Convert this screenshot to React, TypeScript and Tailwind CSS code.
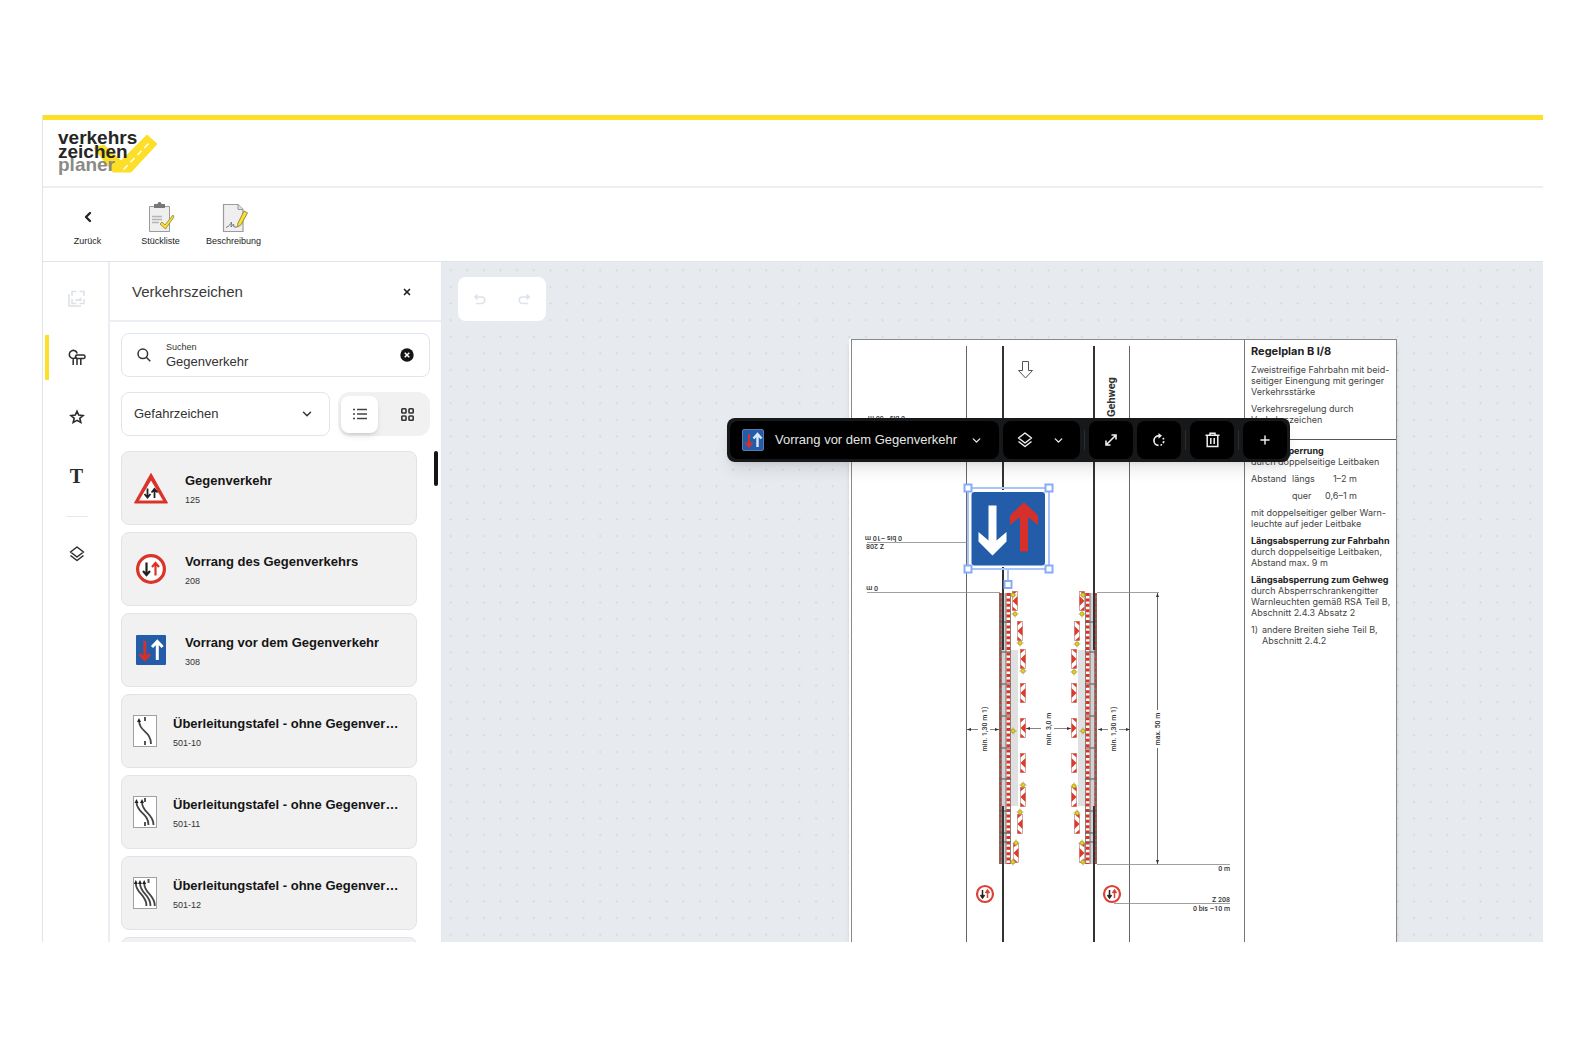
import type { ReactNode } from 'react'
import { ChevronDown, ChevronLeft, Plus, X } from 'lucide-react'

type SignKind = '125' | '208' | '308' | '501-10' | '501-11' | '501-12'

const SIGNS: { name: string; code: string; kind: SignKind }[] = [
  { name: 'Gegenverkehr', code: '125', kind: '125' },
  { name: 'Vorrang des Gegenverkehrs', code: '208', kind: '208' },
  { name: 'Vorrang vor dem Gegenverkehr', code: '308', kind: '308' },
  { name: 'Überleitungstafel - ohne Gegenverkehr', code: '501-10', kind: '501-10' },
  { name: 'Überleitungstafel - ohne Gegenverkehr', code: '501-11', kind: '501-11' },
  { name: 'Überleitungstafel - ohne Gegenverkehr', code: '501-12', kind: '501-12' },
]

// Lane curves on the 501 boards, by number of lanes
const LANES: Record<string, string[]> = {
  '501-10': ['M6 5C6 17 18 16 18 29'],
  '501-11': ['M3.5 6C3.5 17 15.5 17 15.5 29', 'M9 6C9 17 20.5 17 20.5 29'],
  '501-12': ['M2.8 6C2.8 17 13.5 17 13.5 29', 'M7 6C7 17 17.5 17 17.5 29', 'M11.2 6C11.2 17 21.8 17 21.8 29'],
}
const LANE_HEADS: Record<string, number[]> = {
  '501-10': [6],
  '501-11': [3.5, 9],
  '501-12': [2.8, 7, 11.2],
}

function SignIcon({ kind }: { kind: SignKind }) {
  if (kind === '125') {
    return (
      <svg width="36" height="32" viewBox="0 0 36 32" aria-hidden="true">
        <path d="M18 1.5 34.500 31H1.500Z" fill="#db3328" stroke="#db3328" strokeLinejoin="round" />
        <path d="M18 8.5 30 28.500H6Z" fill="#fff" />
        <path d="M14.500 16.500v8.500M11.500 22l3 3.500 3-3.500M21.500 26v-8.500M18.500 20.500l3-3.500 3 3.500" fill="none" stroke="#222" strokeWidth="1.800" />
      </svg>
    )
  }
  if (kind === '208') {
    return (
      <svg width="36" height="30" viewBox="0 0 36 30" aria-hidden="true">
        <circle cx="18" cy="15" r="13.400" fill="#fff" stroke="#db3328" strokeWidth="3.200" />
        <path d="M13.500 8.500v12M10 17l3.500 4 3.500-4" fill="none" stroke="#222" strokeWidth="2.200" />
        <path d="M22.500 21.500v-12M19 13l3.500-4 3.500 4" fill="none" stroke="#db3328" strokeWidth="2.200" />
      </svg>
    )
  }
  if (kind === '308') {
    return (
      <svg width="36" height="30" viewBox="0 0 36 30" aria-hidden="true">
        <rect x="3" width="30" height="30" rx="1" fill="#235da9" />
        <path d="M11.800 6v17M6.500 19l5.300 5.500L17 19" fill="none" stroke="#d7302a" strokeWidth="3" />
        <path d="M24.300 25V7M19 12l5.300-5.500 5.300 5.500" fill="none" stroke="#fff" strokeWidth="3" />
      </svg>
    )
  }
  return (
    <svg width="24" height="32" viewBox="0 0 24 32" aria-hidden="true">
      <rect x=".5" y=".5" width="23" height="31" fill="#fff" stroke="#a0a0a0" />
      <path d={kind === '501-12' ? 'M15.500 2v4' : 'M12 2v4M12 26v4'} stroke="#555" strokeWidth="2" />
      {LANES[kind].map(d => (
        <path key={d} d={d} fill="none" stroke="#444" strokeWidth="1.800" />
      ))}
      {LANE_HEADS[kind].map(x => (
        <path key={x} d={`M${x} 3l2 4h-4z`} fill="#222" />
      ))}
    </svg>
  )
}

function LayersIcon() {
  return (
    <svg width="16" height="16" viewBox="0 0 16 16" fill="none" stroke="currentColor" strokeWidth="1.500" strokeLinejoin="round" aria-hidden="true">
      <path d="M8 1 14.500 6 8 11 1.500 6Z" />
      <path d="M1.500 9.500 8 14.500l6.500-5" />
    </svg>
  )
}

function Logo() {
  return (
    <svg width="104" height="56" viewBox="56 124 104 56" role="img" aria-label="verkehrs zeichen planer">
      <path d="M94 147 104 144l17 16 26-26 10 9-26 28h-18Z" fill="#fcdf26" stroke="#fcdf26" strokeLinejoin="round" />
      <path d="M123.500 168.500 150 141" stroke="#fff" strokeWidth="1.500" strokeDasharray="6 4" />
      <g fontFamily="'Liberation Sans', Arial, sans-serif" fontSize="19" fontWeight="700">
        <text x="58" y="170" fill="#8c8a86">planer</text>
        <text x="58" y="157" fill="#262626">zeichen</text>
        <text x="58" y="143" fill="#262626">verkehrs</text>
      </g>
    </svg>
  )
}

function ActionButton({ label, children }: { label: string; children: ReactNode }) {
  return (
    <button type="button" className="flex w-[73px] flex-col items-center gap-0.5 text-[9px] leading-[14px] text-[#222]">
      <span className="flex h-[30px] items-center justify-center">{children}</span>
      {label}
    </button>
  )
}

function RailButton({ label, active, faded, children }: {
  label: string
  active?: boolean
  faded?: boolean
  children: ReactNode
}) {
  return (
    <button
      type="button"
      aria-label={label}
      className={`flex h-[45px] w-full items-center justify-center border-l-4 pr-1 ${active ? 'border-[#fcdf26]' : 'border-transparent'} ${faded ? 'text-[#dce1e8]' : 'text-[#2b2b2b]'}`}
    >
      {children}
    </button>
  )
}

function Rail() {
  return (
    <nav className="flex w-[67px] shrink-0 flex-col gap-[14px] border-r-2 border-[#ebeff4] pl-0.5 pt-[14px]">
      <RailButton label="Bilder" faded>
        <svg width="17" height="17" viewBox="0 0 17 17" fill="none" stroke="currentColor" strokeWidth="1.500" aria-hidden="true">
          <path d="M1 4v12h12" />
          <path d="M4 6V1.500h4.500M11.500 1.500H16V6M16 9v4.500h-4.500M8.500 13.500H4V9" />
          <path d="M6.500 11 9 8.500l1.500 1.500L12.500 7l1.500 4z" fill="currentColor" stroke="none" />
        </svg>
      </RailButton>
      <RailButton label="Verkehrszeichen" active>
        <svg width="18" height="17" viewBox="0 0 18 17" fill="none" stroke="currentColor" strokeWidth="1.500" aria-hidden="true">
          <path d="M8.500 7.800A4 4 0 1 1 9.200 4.500M5.200 9v7M9 9.500V16M12.800 9.500V16" />
          <rect x="7.500" y="6" width="9.500" height="3.500" rx="1.600" />
        </svg>
      </RailButton>
      <RailButton label="Favoriten">
        <svg width="16" height="16" viewBox="0 0 16 16" fill="none" stroke="currentColor" strokeWidth="1.600" aria-hidden="true">
          <path d="M8 2.200 9.700 6.100l4.300.4-3.200 2.800 1 4.200L8 11.300l-3.800 2.200 1-4.200L2 6.500l4.300-.4Z" />
        </svg>
      </RailButton>
      <RailButton label="Text">
        <span className="font-['Liberation_Serif',serif] text-[20px] font-bold leading-5">T</span>
      </RailButton>
      <hr className="mx-auto mt-1 w-[22px] border-[#e3e8ee]" />
      <RailButton label="Ebenen">
        <LayersIcon />
      </RailButton>
    </nav>
  )
}

function SignPanel() {
  return (
    <aside className="flex w-[332px] shrink-0 flex-col border-r border-[#e3e8ee]">
      <div className="flex h-[60px] shrink-0 items-center justify-between border-b-2 border-[#ebeff4] pl-[22px] pr-[27px] pt-0.5">
        <h2 className="text-[15px] text-[#3a3a3a]">Verkehrszeichen</h2>
        <button type="button" aria-label="Schließen" className="p-0.5 text-[#222]">
          <X size={10} strokeWidth={4} />
        </button>
      </div>

      <div className="mx-[11px] mt-[11px] flex h-11 shrink-0 items-center rounded-lg border border-[#dfe5ec] pl-[15px] pr-[15px]">
        <svg width="14" height="14" viewBox="0 0 14 14" fill="none" stroke="#333" strokeWidth="1.500" aria-hidden="true">
          <circle cx="5.800" cy="5.800" r="4.800" />
          <path d="m9.300 9.300 4 4" />
        </svg>
        <div className="ml-[15px] flex min-w-0 flex-1 flex-col pt-0.5">
          <label htmlFor="suche" className="text-[9px] leading-3 text-[#333]">Suchen</label>
          <input id="suche" defaultValue="Gegenverkehr" className="h-[18px] w-full text-[13px] text-[#333] outline-none" />
        </div>
        <button type="button" aria-label="Suche leeren">
          <svg width="14" height="14" viewBox="0 0 14 14" aria-hidden="true">
            <circle cx="7" cy="7" r="6.700" fill="#151515" />
            <path d="m4.700 4.700 4.600 4.600m0-4.600L4.700 9.300" stroke="#fff" strokeWidth="1.500" />
          </svg>
        </button>
      </div>

      <div className="mx-[11px] mt-[15px] flex h-11 shrink-0 gap-2">
        <div className="relative flex-1">
          <select
            aria-label="Kategorie"
            className="h-full w-full appearance-none rounded-lg border border-[#dfe5ec] bg-white pl-3 pr-8 text-[13px] text-[#333]"
          >
            <option>Gefahrzeichen</option>
          </select>
          <ChevronDown size={14} strokeWidth={2.5} className="pointer-events-none absolute right-4 top-[15px] text-[#333]" />
        </div>
        <div className="flex w-[92px] items-center rounded-xl bg-[#f1f1f1] pl-[3px]">
          <button type="button" aria-label="Liste" className="flex h-[37px] w-[37px] items-center justify-center rounded-lg bg-white shadow-md">
            <svg width="14" height="12" viewBox="0 0 14 12" fill="none" stroke="#444" strokeWidth="1.500" aria-hidden="true">
              <path d="M0 1.500h2M4 1.500h10M0 6h2M4 6h10M0 10.500h2M4 10.500h10" />
            </svg>
          </button>
          <button type="button" aria-label="Raster" className="flex h-[37px] flex-1 items-center justify-center pl-1.5">
            <svg width="13" height="13" viewBox="0 0 13 13" fill="none" stroke="#333" strokeWidth="1.600" aria-hidden="true">
              <rect x=".8" y=".8" width="4.200" height="4.200" rx=".8" />
              <rect x="8" y=".8" width="4.200" height="4.200" rx=".8" />
              <rect x=".8" y="8" width="4.200" height="4.200" rx=".8" />
              <rect x="8" y="8" width="4.200" height="4.200" rx=".8" />
            </svg>
          </button>
        </div>
      </div>

      <div className="mt-[15px] flex min-h-0 flex-1 gap-[17px] overflow-hidden pl-[11px] pr-[3px]">
        <ul className="flex min-w-0 flex-1 flex-col gap-[7px]">
          {SIGNS.map(s => (
            <li key={s.code} className="shrink-0">
              <button type="button" className="flex h-[74px] w-full items-center gap-4 rounded-lg border border-[#dfe4ea] bg-[#f1f1f1] pl-[11px] pr-4 text-left">
                <span className="shrink-0"><SignIcon kind={s.kind} /></span>
                <span className="min-w-0 pt-[3px]">
                  <span className="block truncate text-[13px] font-bold leading-5 text-[#151515]">{s.name}</span>
                  <span className="block text-[9px] leading-[18px] text-[#333]">{s.code}</span>
                </span>
              </button>
            </li>
          ))}
          <li className="h-[74px] shrink-0 rounded-lg border border-[#dfe4ea] bg-[#f1f1f1]" />
        </ul>
        <div className="h-[35px] w-1 shrink-0 rounded-full bg-[#151515]" />
      </div>
    </aside>
  )
}

// x of the left and right beacon in each row, y is the row's centre
const BEACONS = [
  { l: 1015, r: 1082, y: 601, up: true },
  { l: 1020, r: 1077, y: 631, up: true },
  { l: 1023, r: 1074, y: 659, up: true },
  { l: 1023, r: 1074, y: 693, up: true },
  { l: 1023, r: 1074, y: 728, up: true },
  { l: 1023, r: 1074, y: 763, up: true },
  { l: 1023, r: 1074, y: 797, up: false },
  { l: 1020, r: 1077, y: 824, up: false },
  { l: 1016, r: 1082, y: 853, up: false },
]
const LAMPS = [
  [1013, 595], [1015, 614], [1020, 643], [1023, 671], [1013, 731], [1023, 785], [1020, 812], [1016, 843], [1013, 862],
  [1083, 595], [1082, 614], [1077, 644], [1074, 672], [1083, 731], [1074, 786], [1077, 813], [1082, 843], [1083, 862],
]
const JOINTS = [622, 652, 684, 716, 748, 779, 811, 833, 842]

function Beacon({ x, y, mirror }: { x: number; y: number; mirror: boolean }) {
  return (
    <g transform={`translate(${x} ${y}) scale(${mirror ? -1 : 1} 1)`}>
      <rect x="-2.500" y="-9.500" width="5" height="19" fill="#fff" stroke="#b98a80" strokeWidth=".7" />
      <path d="M-2.500-9.500H2L-2.500-5.500ZM2.500-5v10L-2.500 0ZM-2.500 9.500H2L-2.500 5.500Z" fill="#dd3a2c" />
    </g>
  )
}

function Fence({ x, mirror }: { x: number; mirror: boolean }) {
  return (
    <g transform={`translate(${x} 0) scale(${mirror ? -1 : 1} 1)`}>
      <rect x="12" y="650" width="7" height="156" fill="#e0e0e0" />
      <rect y="593" width="12" height="271" fill="#7d716e" />
      <rect x="2.800" y="593" width="3.700" height="271" fill="#d2d2d2" />
      <path d="M1.400 593v271" stroke="#c9392d" strokeWidth="1.600" strokeDasharray="3 2.4" />
      <path d="M9.300 593v271" stroke="#fff" strokeWidth="3.600" />
      <path d="M9.300 593v271" stroke="#dd3325" strokeWidth="3.600" strokeDasharray="3 2.4" />
      {JOINTS.map(y => (
        <path key={y} d={`M0 ${y}h12`} stroke="#666" strokeWidth="1.200" />
      ))}
    </g>
  )
}

function RoundSign({ x, y }: { x: number; y: number }) {
  return (
    <g transform={`translate(${x} ${y})`}>
      <circle r="8" fill="#fff" stroke="#dd4034" strokeWidth="2.200" />
      <path d="M-2.500-4v7M-4.500 1l2 3 2-3" fill="none" stroke="#222" strokeWidth="1.500" />
      <path d="M2.500 4v-7M.5-1l2-3 2 3" fill="none" stroke="#dd4034" strokeWidth="1.500" />
    </g>
  )
}

function PlanDrawing() {
  return (
    <svg
      width="395"
      height="603"
      viewBox="849 339 395 603"
      className="block shrink-0"
      fontFamily="'Roboto', sans-serif"
      fontSize="7"
      fontWeight="500"
      fill="#333"
      aria-hidden="true"
    >
      {/* Kerbs and edges */}
      <path d="M966.500 346v596M1129.500 346v596" stroke="#666" strokeWidth="1" />
      <Fence x={999} mirror={false} />
      <Fence x={1097} mirror />
      <path d="M1003 346v304M1003 806v136M1094 346v304M1094 806v136" stroke="#333" strokeWidth="2" />

      {BEACONS.map(b => (
        <g key={b.y}>
          <Beacon x={b.l} y={b.y} mirror={false} />
          <Beacon x={b.r} y={b.y} mirror />
        </g>
      ))}
      {LAMPS.map(([x, y]) => (
        <g key={`${x}-${y}`}>
          <path d={`M${x - 3.5} ${y}h7M${x} ${y - 3.5}v7`} stroke="#a39a5a" strokeWidth=".7" />
          <circle cx={x} cy={y} r="2" fill="#e8cf1f" stroke="#9a8a20" strokeWidth=".6" />
        </g>
      ))}

      {/* Driving direction */}
      <path d="M1022.500 361.500h6v9h4l-7 7.500-7-7.500h4Z" fill="#fff" stroke="#555" />
      <text transform="translate(1115 417) rotate(-90)" fontSize="11" fontWeight="700">Gehweg</text>

      {/* Labels for the opposite direction stand on their head */}
      <path d="M867 542.500h100M867 592.500h133" stroke="#888" strokeWidth=".8" />
      <text transform="translate(902 536) rotate(180)">0 bis –10 m</text>
      <text transform="translate(884 544) rotate(180)">Z 208</text>
      <text transform="translate(878 586) rotate(180)">0 m</text>
      <text transform="translate(905 416) rotate(180)">0 bis –50 m</text>

      {/* Dimensions */}
      <path d="M967 729.500h11M990 729.500h9M1026 728.500h15M1054 728.500h17M1098 729.500h10M1119 729.500h11" stroke="#666" strokeWidth=".8" />
      <path d="m967 729.500 4-1.500v3ZM999 729.500l-4-1.500v3ZM1026 728.500l4-1.500v3ZM1071 728.500l-4-1.500v3ZM1098 729.500l4-1.500v3ZM1130 729.500l-4-1.500v3Z" />
      <path d="M1157.500 593v117M1157.500 748v116" stroke="#444" strokeWidth=".8" />
      <path d="m1157.500 593 1.500 4h-3ZM1157.500 864l1.500-4h-3Z" />
      <g textAnchor="middle">
        <text transform="translate(987 729) rotate(-90)">min. 1,30 m 1)</text>
        <text transform="translate(1051 729) rotate(-90)">min. 3,0 m</text>
        <text transform="translate(1116 729) rotate(-90)">min. 1,30 m 1)</text>
        <text transform="translate(1160 729) rotate(-90)">max. 50 m</text>
      </g>
      <path d="M1097 592.500h62M1097 864.500h133M1114 903.500h116" stroke="#888" strokeWidth=".8" />
      <g textAnchor="end">
        <text x="1230" y="871">0 m</text>
        <text x="1230" y="902">Z 208</text>
        <text x="1230" y="911">0 bis –10 m</text>
      </g>
      <RoundSign x={985} y={894} />
      <RoundSign x={1112} y={894} />
    </svg>
  )
}

function PlanNotes() {
  return (
    <div className="min-w-0 flex-1 whitespace-nowrap border-l border-[#777] font-['Inter',sans-serif] text-[9px] leading-[11px] text-[#444]">
      <div className="h-[100px] border-b border-[#555] pl-1.5 pt-[5px]">
        <h3 className="text-[11px] font-bold leading-[13px] text-[#222]">Regelplan B I/8</h3>
        <p className="mt-1.5">Zweistreifige Fahrbahn mit beid-<br />seitiger Einengung mit geringer<br />Verkehrsstärke</p>
        <p className="mt-1.5">Verkehrsregelung durch<br />Verkehrszeichen</p>
      </div>
      <div className="flex flex-col gap-1.5 pl-1.5 pt-[5px]">
        <p><b className="text-[#222]">Querabsperrung</b><br />durch doppelseitige Leitbaken</p>
        <div className="flex gap-1.5">
          <span className="w-[35px]">Abstand</span>
          <span className="w-[26px]">längs</span>
          <span className="w-[33px] text-right">1–2 m</span>
        </div>
        <div className="flex gap-1.5 pl-[41px]">
          <span className="w-[26px]">quer</span>
          <span className="w-[33px] text-right">0,6–1 m</span>
        </div>
        <p>mit doppelseitiger gelber Warn-<br />leuchte auf jeder Leitbake</p>
        <p><b className="text-[#222]">Längsabsperrung zur Fahrbahn</b><br />durch doppelseitige Leitbaken,<br />Abstand max. 9 m</p>
        <p><b className="text-[#222]">Längsabsperrung zum Gehweg</b><br />durch Absperrschrankengitter<br />Warnleuchten gemäß RSA Teil B,<br />Abschnitt 2.4.3 Absatz 2</p>
        <p className="flex gap-1"><span>1)</span><span>andere Breiten siehe Teil B,<br />Abschnitt 2.4.2</span></p>
      </div>
    </div>
  )
}

function SelectedSign() {
  return (
    <svg width="92" height="110" viewBox="962 482 92 110" className="absolute left-[520px] top-[220px]" role="img" aria-label="Ausgewähltes Zeichen">
      <rect x="970" y="490" width="76" height="77" rx="4" fill="#fff" />
      <rect x="971.500" y="492" width="73.500" height="73.500" rx="3" fill="#235da9" />
      <path d="M988.500 505.500h8v35l10-8.500v9.500L992.500 555.500 978.500 541.500V532l10 8.500Z" fill="#fff" />
      <path d="M1020 551.500h8v-34.500l10 8V515.500L1024 502.300 1010 515.500v9.500l10-8Z" fill="#d7302a" />
      <g fill="none" stroke="#86acf8" strokeWidth="2">
        <rect x="968" y="488" width="81" height="81" stroke="#a8c4fb" />
        <path d="M1008 569v12" stroke="#a8c4fb" />
        <rect x="964.500" y="484.500" width="7" height="7" fill="#fff" />
        <rect x="1045.500" y="484.500" width="7" height="7" fill="#fff" />
        <rect x="964.500" y="565.500" width="7" height="7" fill="#fff" />
        <rect x="1045.500" y="565.500" width="7" height="7" fill="#fff" />
        <rect x="1004.500" y="581" width="7" height="7" fill="#fff" />
      </g>
    </svg>
  )
}

function ToolButton({ label, children }: { label: string; children: ReactNode }) {
  return (
    <button type="button" aria-label={label} className="flex h-full w-11 items-center justify-center rounded-lg bg-black">
      {children}
    </button>
  )
}

function Divider() {
  return <span className="h-5 w-px bg-[#2c2d30]" />
}

function ObjectToolbar() {
  return (
    <div className="absolute left-[285px] top-[156px] flex h-11 items-center gap-1 rounded-lg bg-[#17181a] p-[3px] text-[#eee] shadow-lg">
      <button type="button" className="flex h-full w-[269px] items-center rounded-lg bg-black pl-3 text-[13px] text-[#e5e5e5]">
        <svg width="22" height="22" viewBox="0 0 22 22" aria-hidden="true">
          <rect x=".5" y=".5" width="21" height="21" rx="1.500" fill="#235da9" stroke="#5c7ba6" />
          <path d="M7 5v12M3.500 13.500 7 17.500l3.500-4" fill="none" stroke="#d7302a" strokeWidth="2" />
          <path d="M15.500 18V5.500M11.500 9.500l4-4.500 4 4.500" fill="none" stroke="#dce8f8" strokeWidth="2.400" />
        </svg>
        <span className="ml-[11px]">Vorrang vor dem Gegenverkehr</span>
        <ChevronDown size={13} strokeWidth={2.5} className="ml-[13px]" />
      </button>
      <button type="button" aria-label="Ebene" className="flex h-full w-[77px] items-center justify-between rounded-lg bg-black pl-3.5 pr-[15px]">
        <LayersIcon />
        <ChevronDown size={13} strokeWidth={2.5} />
      </button>
      <Divider />
      <ToolButton label="Größe">
        <svg width="12" height="12" viewBox="0 0 12 12" fill="none" stroke="currentColor" strokeWidth="1.600" aria-hidden="true">
          <path d="M1.500 10.500l9-9M6.500 1H11v4.500M1 6.500V11h4.500" />
        </svg>
      </ToolButton>
      <ToolButton label="Drehen">
        <svg width="14" height="14" viewBox="0 0 14 14" fill="none" stroke="currentColor" strokeWidth="1.700" aria-hidden="true">
          <path d="M6.500 12.400A4.800 4.800 0 0 1 7 2.800h1" />
          <path d="M6.500 0 10 2.800 6.500 5.700Z" fill="currentColor" stroke="none" />
          <path d="M8.500 12.200A4.800 4.800 0 0 0 11 5" strokeDasharray="1.8 1.6" />
        </svg>
      </ToolButton>
      <Divider />
      <ToolButton label="Löschen">
        <svg width="15" height="16" viewBox="0 0 15 16" fill="none" stroke="currentColor" strokeWidth="1.500" aria-hidden="true">
          <path d="M.5 3.300h14M5 3V1.200h5V3M2.200 3.500v11h10.600v-11M5.800 6v6M9.200 6v6" />
        </svg>
      </ToolButton>
      <Divider />
      <ToolButton label="Mehr">
        <Plus size={14} strokeWidth={2.5} />
      </ToolButton>
    </div>
  )
}

function Canvas() {
  return (
    <main className="relative min-w-0 flex-1 overflow-hidden bg-[#e7eaef]">
      <svg className="absolute inset-0 h-full w-full" aria-hidden="true">
        <defs>
          <pattern id="dots" x=".4" y="0" width="16.610" height="16.610" patternUnits="userSpaceOnUse">
            <circle cx="8.300" cy="8.300" r="1" fill="#cfd4d8" />
          </pattern>
        </defs>
        <rect width="100%" height="100%" fill="url(#dots)" />
      </svg>

      <div className="absolute left-4 top-[15px] flex h-11 w-[88px] rounded-lg bg-white text-[#dde3ea]">
        <button type="button" aria-label="Rückgängig" className="flex flex-1 items-center justify-center">
          <svg width="12" height="11" viewBox="0 0 12 11" fill="none" stroke="currentColor" strokeWidth="1.600" aria-hidden="true">
            <path d="M3.500.500.900 3l2.600 2.500M1 3h6.500a3.200 3.200 0 0 1 0 6.500H2" />
          </svg>
        </button>
        <button type="button" aria-label="Wiederholen" className="flex flex-1 items-center justify-center">
          <svg width="12" height="11" viewBox="0 0 12 11" fill="none" stroke="currentColor" strokeWidth="1.600" aria-hidden="true">
            <path d="M8.500.5 11.100 3 8.500 5.500M11 3H4.500a3.200 3.200 0 0 0 0 6.500H10" />
          </svg>
        </button>
      </div>

      {/* Sheet */}
      <div className="absolute bottom-0 left-[407px] top-[77px] w-[548px] overflow-hidden bg-white pl-[2px] shadow-md">
        <div className="flex h-full border-x border-t border-[#888]">
          <div className="ml-[-3px] mt-[-1px] shrink-0 overflow-hidden">
            <PlanDrawing />
          </div>
          <PlanNotes />
        </div>
      </div>

      <SelectedSign />
      <ObjectToolbar />
    </main>
  )
}

export default function App() {
  return (
    <div className="h-screen bg-white pb-[116px] pl-[42px] pr-[43px] pt-[115px] font-['Liberation_Sans',Arial,sans-serif]">
      <div className="flex h-full flex-col overflow-hidden border-l border-[#dfe4ea]">
        <div className="h-[5px] shrink-0 bg-[#fcdf26]" />
        <header className="flex h-[68px] shrink-0 items-center border-b-2 border-[#ebeff4] pl-[13px]">
          <Logo />
        </header>

        <div className="flex h-[74px] shrink-0 items-center border-b border-[#dfe4ea] pl-2">
          <ActionButton label="Zurück">
            <ChevronLeft size={16} strokeWidth={3.5} />
          </ActionButton>
          <ActionButton label="Stückliste">
            <svg width="28" height="30" viewBox="0 0 28 30" aria-hidden="true">
              <path d="M2.500 4.500h20v25h-20z" fill="#efefef" stroke="#9b9b9b" />
              <path d="M7 2h3.500a2 2 0 0 1 4 0H18v4H7z" fill="#777" />
              <path d="M5 14.500h10M5 17.500h10M5 20.500h7" stroke="#b5b5b5" strokeWidth="1.300" />
              <path d="m13 22 2-2 3 3 8-10 1 2-8.500 12Z" fill="#fcdf26" stroke="#8a8244" strokeWidth=".8" />
            </svg>
          </ActionButton>
          <ActionButton label="Beschreibung">
            <svg width="28" height="30" viewBox="0 0 28 30" aria-hidden="true">
              <path d="M3.500 2.500H18l5 5v22H3.500z" fill="#efefef" stroke="#9b9b9b" strokeWidth="1.200" />
              <path d="M18 2.500v5h5" fill="#ddd" stroke="#9b9b9b" />
              <path d="M6 25.500c3-1 5-4 5.500-5.500l-.5 5 2.500-3 .5 3h3" fill="none" stroke="#777" />
              <path d="m17.500 25 .5-4 6-12 3.500 1.800-6.500 12Z" fill="#fcdf26" stroke="#8a8244" strokeWidth=".9" />
            </svg>
          </ActionButton>
        </div>

        <div className="flex min-h-0 flex-1">
          <Rail />
          <SignPanel />
          <Canvas />
        </div>
      </div>
    </div>
  )
}
